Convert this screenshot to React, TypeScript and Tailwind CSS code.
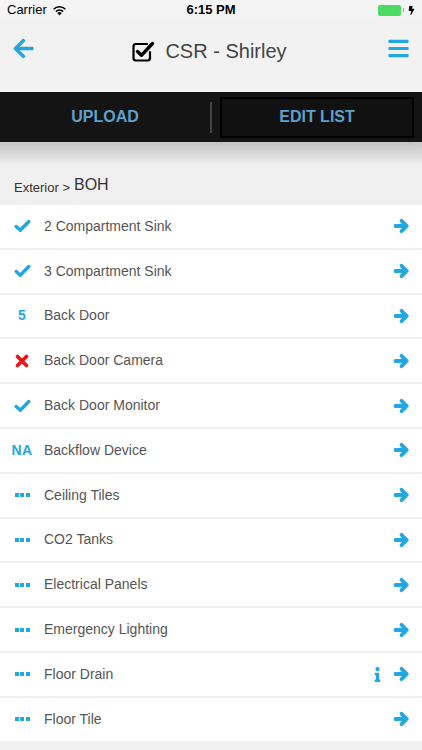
import React from "react";
import { FaArrowLeft, FaBars, FaInfo, FaBolt } from "react-icons/fa";

type Item = { label: string; kind: "check" | "x" | "num" | "na" | "dots"; info?: boolean };

const items: Item[] = [
  { label: "2 Compartment Sink", kind: "check" },
  { label: "3 Compartment Sink", kind: "check" },
  { label: "Back Door", kind: "num" },
  { label: "Back Door Camera", kind: "x" },
  { label: "Back Door Monitor", kind: "check" },
  { label: "Backflow Device", kind: "na" },
  { label: "Ceiling Tiles", kind: "dots" },
  { label: "CO2 Tanks", kind: "dots" },
  { label: "Electrical Panels", kind: "dots" },
  { label: "Emergency Lighting", kind: "dots" },
  { label: "Floor Drain", kind: "dots", info: true },
  { label: "Floor Tile", kind: "dots" },
];

function Arrow() {
  return (
    <svg width="17" height="16" viewBox="0 0 17 16">
      <path d="M2.5 8 H13.5 M8.5 2.8 L13.8 8 L8.5 13.2" stroke="#22a7e0" strokeWidth="3.8" strokeLinecap="round" strokeLinejoin="round" fill="none" />
    </svg>
  );
}

function Check() {
  return (
    <svg width="17" height="14" viewBox="0 0 17 14">
      <path d="M2.2 7.5 L6.3 11.3 L14.8 2.5" stroke="#22a7e0" strokeWidth="3.4" strokeLinecap="round" strokeLinejoin="round" fill="none" />
    </svg>
  );
}

function Cross() {
  return (
    <svg width="14" height="14" viewBox="0 0 14 14">
      <path d="M2.5 2.5 L11.5 11.5 M11.5 2.5 L2.5 11.5" stroke="#e8121c" strokeWidth="3.6" strokeLinecap="round" fill="none" />
    </svg>
  );
}

function Dots() {
  return (
    <div className="flex gap-[1.5px]">
      <div className="w-[4px] h-[4px] bg-[#22a7e0]" />
      <div className="w-[4px] h-[4px] bg-[#22a7e0]" />
      <div className="w-[4px] h-[4px] bg-[#22a7e0]" />
    </div>
  );
}

function StatusIcon({ kind }: { kind: Item["kind"] }) {
  if (kind === "check") return <Check />;
  if (kind === "x") return <Cross />;
  if (kind === "num") return <span className="text-[#22a7e0] font-bold text-[14px]">5</span>;
  if (kind === "na") return <span className="text-[#22a7e0] font-bold text-[14px] tracking-[0.5px]">NA</span>;
  return <Dots />;
}

function CheckSquare() {
  return (
    <svg width="25" height="24" viewBox="0 0 25 24">
      <path d="M16 5 H5 Q2.5 5 2.5 7.5 V19 Q2.5 21.5 5 21.5 H16.5 Q19 21.5 19 19 V13" stroke="#000" strokeWidth="2.2" fill="none" strokeLinecap="round" />
      <path d="M6.5 12.5 L10.5 16.3 L21.5 4.5" stroke="#000" strokeWidth="3.4" strokeLinecap="round" strokeLinejoin="round" fill="none" />
    </svg>
  );
}

function Wifi() {
  return (
    <svg width="15" height="11" viewBox="0 0 15 11">
      <path d="M7.5 10.5 L5.3 8.1 A3.2 3.2 0 0 1 9.7 8.1 Z" fill="#000" />
      <path d="M3.9 6.6 A5.2 5.2 0 0 1 11.1 6.6" stroke="#000" strokeWidth="1.6" fill="none" />
      <path d="M1.6 4.2 A8.4 8.4 0 0 1 13.4 4.2" stroke="#000" strokeWidth="1.6" fill="none" />
    </svg>
  );
}

export default function App() {
  return (
    <div className="w-[422px] h-[750px] overflow-hidden bg-[#f0f0f0]" style={{ fontFamily: '"Liberation Sans", Arial, sans-serif' }}>
      {/* status bar */}
      <div className="h-[20px] bg-[#f4f4f4] flex items-center px-[7px] text-[13px] text-black relative">
        <div className="flex items-center gap-[5px]">
          <span>Carrier</span>
          <Wifi />
        </div>
        <div className="absolute left-0 right-0 text-center font-bold text-[13px] pointer-events-none">6:15 PM</div>
        <div className="ml-auto flex items-center gap-[2px]">
          <div className="w-[23px] h-[11px] rounded-[2px] bg-[#4cd964]" />
          <div className="w-[1.5px] h-[4px] bg-[#4cd964]" />
          <FaBolt className="w-[7px] h-[9px] text-black ml-[2px]" />
        </div>
      </div>
      {/* nav bar */}
      <div className="h-[72px] bg-[#f2f2f2] flex items-start pt-[16px] px-[12px]">
        <FaArrowLeft className="text-[#22a7e0] w-[23px] h-[23px] mt-[1px]" />
        <div className="flex-1 flex items-center justify-center gap-[9px] pr-[4px]">
          <CheckSquare />
          <span className="text-[20px] text-[#444]">CSR - Shirley</span>
        </div>
        <FaBars className="text-[#22a7e0] w-[23px] h-[23px] mt-[1px]" />
      </div>
      {/* black action bar */}
      <div className="h-[50px] bg-[#141414] flex items-center">
        <div className="flex-1 flex items-center justify-center text-[#5ea1cb] font-bold text-[16px]">UPLOAD</div>
        <div className="w-[2px] h-[31px] bg-[#444]" />
        <div className="w-[8px]" />
        <div className="w-[194px] h-[41px] bg-[#111] border-2 border-black flex items-center justify-center text-[#5ea1cb] font-bold text-[16px]">EDIT LIST</div>
        <div className="w-[8px]" />
      </div>
      {/* shadow */}
      <div className="h-[24px] bg-gradient-to-b from-[#c4c4c4] to-[#f0f0f0]" />
      {/* breadcrumb */}
      <div className="h-[39px] flex items-end pb-[8px] px-[14px] text-[#333]">
        <span className="text-[13px]">Exterior &gt;</span>
        <span className="text-[16px] ml-[4px]">BOH</span>
      </div>
      {/* list */}
      <div className="flex flex-col gap-[2px]">
        {items.map((it) => (
          <div key={it.label} className="h-[42.8px] bg-white flex items-center">
            <div className="w-[44px] flex items-center justify-center">
              <StatusIcon kind={it.kind} />
            </div>
            <span className="text-[14px] text-[#555]">{it.label}</span>
            <div className="ml-auto flex items-center gap-[11px] pr-[12px]">
              {it.info && <FaInfo className="text-[#22a7e0] w-[9px] h-[15px]" />}
              <Arrow />
            </div>
          </div>
        ))}
      </div>
    </div>
  );
}
